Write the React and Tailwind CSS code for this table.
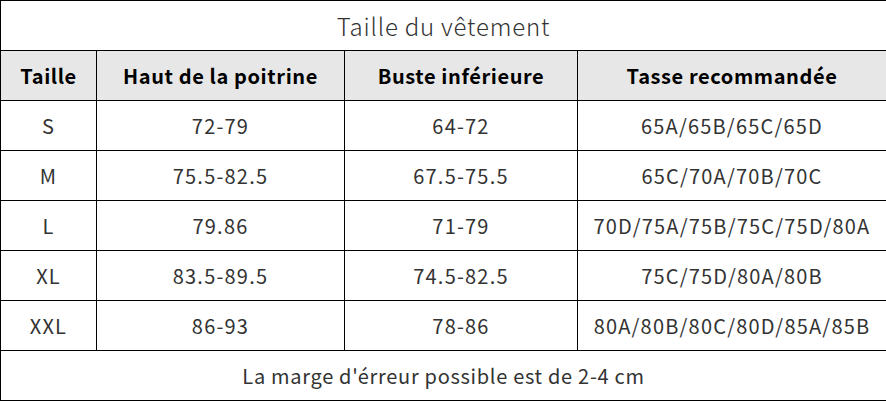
import React from "react";

const rows = [
  ["S", "72-79", "64-72", "65A/65B/65C/65D"],
  ["M", "75.5-82.5", "67.5-75.5", "65C/70A/70B/70C"],
  ["L", "79.86", "71-79", "70D/75A/75B/75C/75D/80A"],
  ["XL", "83.5-89.5", "74.5-82.5", "75C/75D/80A/80B"],
  ["XXL", "86-93", "78-86", "80A/80B/80C/80D/85A/85B"],
];

const headers = ["Taille", "Haut de la poitrine", "Buste inférieure", "Tasse recommandée"];

export default function App() {
  return (
    <div
      className="w-[886px] h-[401px] bg-white"
      style={{ fontFamily: '"Noto Sans CJK SC", "Noto Sans", sans-serif' }}
    >
      <table className="w-[886px] border-collapse table-fixed text-center">
        <colgroup>
          <col className="w-[96px]" />
          <col className="w-[248px]" />
          <col className="w-[233px]" />
          <col className="w-[309px]" />
        </colgroup>
        <tbody>
          <tr className="h-[50px]">
            <td colSpan={4} className="border border-black text-[24px] font-light tracking-[0.8px] text-[#333]">
              Taille du vêtement
            </td>
          </tr>
          <tr className="h-[50px] bg-[#e7e7e7]">
            {headers.map((h) => (
              <td key={h} className="border border-black text-[20px] font-bold tracking-[0.6px] text-black">
                {h}
              </td>
            ))}
          </tr>
          {rows.map((r) => (
            <tr key={r[0]} className="h-[50px]">
              {r.map((c, i) => (
                <td key={i} className="border border-black text-[20px] tracking-[1.2px] text-[#333] whitespace-nowrap">
                  {c}
                </td>
              ))}
            </tr>
          ))}
          <tr className="h-[50px]">
            <td colSpan={4} className="border border-black text-[20px] tracking-[0.7px] text-[#333]">
              La marge d'érreur possible est de 2-4 cm
            </td>
          </tr>
        </tbody>
      </table>
    </div>
  );
}
